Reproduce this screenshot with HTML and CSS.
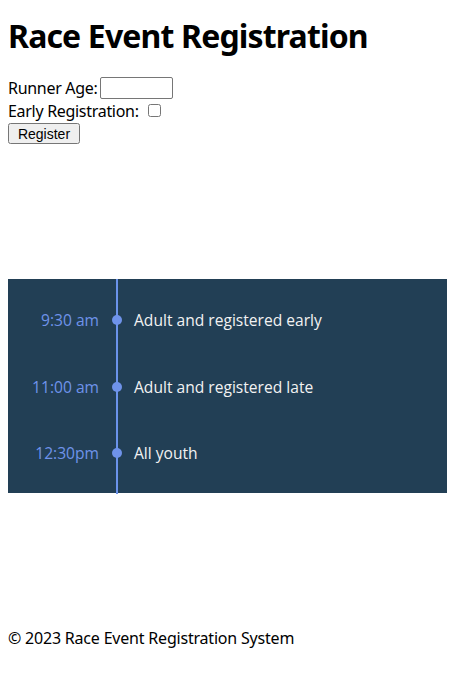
FILE: index.html
```html
<!DOCTYPE html>
<html>
<head>
<meta charset="utf-8">
<link rel="stylesheet" href="styles.css">
</head>
<body>
<h1 class="title">Race Event Registration</h1>
<form class="reg-form">
  <div class="row"><label for="age">Runner Age:</label> <input id="age" class="age-input" type="text"></div>
  <div class="row"><label for="early">Early Registration:</label> <input id="early" type="checkbox" class="check"></div>
  <button type="button" class="btn">Register</button>
</form>
<section class="timeline">
  <div class="line"></div>
  <div class="item"><span class="time">9:30 am</span><span class="dot"></span><span class="desc">Adult and registered early</span></div>
  <div class="item"><span class="time">11:00 am</span><span class="dot"></span><span class="desc">Adult and registered late</span></div>
  <div class="item"><span class="time">12:30pm</span><span class="dot"></span><span class="desc">All youth</span></div>
</section>
<footer class="footer">© 2023 Race Event Registration System</footer>
</body>
</html>
```
FILE: styles.css
```css
body {
  margin: 8px;
  font-family: "Noto Sans", sans-serif;
  font-size: 16px;
  letter-spacing: -0.2px;
  color: #000;
}
.title {
  font-size: 32px;
  font-weight: 700;
  margin: 10px 0 22px;
  line-height: 36px;
  letter-spacing: -0.85px;
}
.reg-form {
  line-height: 22px;
}
.row {
  height: 23px;
  display: flex;
  align-items: center;
}
.row label { margin-right: 1px; letter-spacing: -0.3px; }
.age-input {
  width: 67px;
  height: 18px;
  padding: 1px 2px;
  border: 1px solid #767676;
  border-radius: 2px;
  margin: 0 0 0 2px;
}
.check {
  margin: 0 0 0 8px;
  width: 13px;
  height: 13px;
}
.btn {
  font-family: "Liberation Sans", Arial, sans-serif;
  font-size: 14px;
  letter-spacing: 0;
  padding: 1px 4px;
  margin: 0;
  height: 21px;
  width: 72px;
}
.timeline {
  position: relative;
  margin-top: 135px;
  background: #223f55;
  height: 214px;
  width: 440px;
  padding-top: 8px;
  box-sizing: border-box;
  font-family: "Open Sans", sans-serif;
  font-size: 15.6px;
  letter-spacing: 0;
}
.line {
  position: absolute;
  left: 108px;
  top: 0;
  width: 2px;
  height: 215px;
  background: #6b93ea;
}
.item {
  display: flex;
  align-items: center;
  height: 66.5px;
}
.time {
  width: 91px;
  text-align: right;
  color: #6f93ea;
}
.dot {
  width: 10px;
  height: 10px;
  border-radius: 50%;
  background: #6f93ea;
  margin-left: 13px;
  position: relative;
}
.desc {
  color: #f2f2f2;
  margin-left: 12px;
}
.footer {
  margin-top: 135px;
  line-height: 20px;
}
```
